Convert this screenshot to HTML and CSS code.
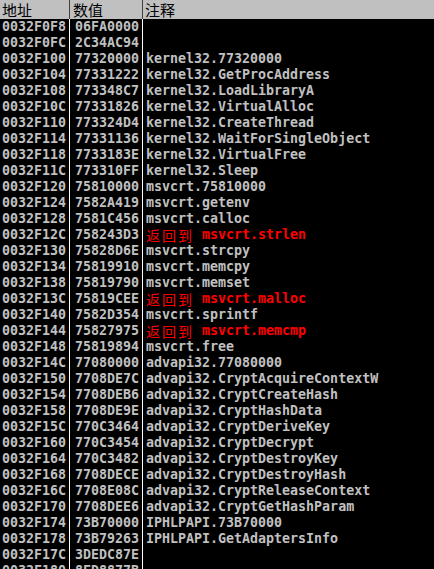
FILE: index.html
```html
<!DOCTYPE html>
<html>
<head>
<meta charset="utf-8">
<link rel="stylesheet" href="styles.css">
</head>
<body>
<div class="dump">
  <div class="head">
    <div class="c1">地址</div>
    <div class="c2">数值</div>
    <div class="c3">注释</div>
  </div>
  <div class="row"><div class="c1">0032F0F8</div><div class="c2">06FA0000</div><div class="c3"></div></div>
  <div class="row"><div class="c1">0032F0FC</div><div class="c2">2C34AC94</div><div class="c3"></div></div>
  <div class="row"><div class="c1">0032F100</div><div class="c2">77320000</div><div class="c3">kernel32.77320000</div></div>
  <div class="row"><div class="c1">0032F104</div><div class="c2">77331222</div><div class="c3">kernel32.GetProcAddress</div></div>
  <div class="row"><div class="c1">0032F108</div><div class="c2">773348C7</div><div class="c3">kernel32.LoadLibraryA</div></div>
  <div class="row"><div class="c1">0032F10C</div><div class="c2">77331826</div><div class="c3">kernel32.VirtualAlloc</div></div>
  <div class="row"><div class="c1">0032F110</div><div class="c2">773324D4</div><div class="c3">kernel32.CreateThread</div></div>
  <div class="row"><div class="c1">0032F114</div><div class="c2">77331136</div><div class="c3">kernel32.WaitForSingleObject</div></div>
  <div class="row"><div class="c1">0032F118</div><div class="c2">7733183E</div><div class="c3">kernel32.VirtualFree</div></div>
  <div class="row"><div class="c1">0032F11C</div><div class="c2">773310FF</div><div class="c3">kernel32.Sleep</div></div>
  <div class="row"><div class="c1">0032F120</div><div class="c2">75810000</div><div class="c3">msvcrt.75810000</div></div>
  <div class="row"><div class="c1">0032F124</div><div class="c2">7582A419</div><div class="c3">msvcrt.getenv</div></div>
  <div class="row"><div class="c1">0032F128</div><div class="c2">7581C456</div><div class="c3">msvcrt.calloc</div></div>
  <div class="row"><div class="c1">0032F12C</div><div class="c2">758243D3</div><div class="c3 ret"><span class="cjk">返回到</span> msvcrt.strlen</div></div>
  <div class="row"><div class="c1">0032F130</div><div class="c2">75828D6E</div><div class="c3">msvcrt.strcpy</div></div>
  <div class="row"><div class="c1">0032F134</div><div class="c2">75819910</div><div class="c3">msvcrt.memcpy</div></div>
  <div class="row"><div class="c1">0032F138</div><div class="c2">75819790</div><div class="c3">msvcrt.memset</div></div>
  <div class="row"><div class="c1">0032F13C</div><div class="c2">75819CEE</div><div class="c3 ret"><span class="cjk">返回到</span> msvcrt.malloc</div></div>
  <div class="row"><div class="c1">0032F140</div><div class="c2">7582D354</div><div class="c3">msvcrt.sprintf</div></div>
  <div class="row"><div class="c1">0032F144</div><div class="c2">75827975</div><div class="c3 ret"><span class="cjk">返回到</span> msvcrt.memcmp</div></div>
  <div class="row"><div class="c1">0032F148</div><div class="c2">75819894</div><div class="c3">msvcrt.free</div></div>
  <div class="row"><div class="c1">0032F14C</div><div class="c2">77080000</div><div class="c3">advapi32.77080000</div></div>
  <div class="row"><div class="c1">0032F150</div><div class="c2">7708DE7C</div><div class="c3">advapi32.CryptAcquireContextW</div></div>
  <div class="row"><div class="c1">0032F154</div><div class="c2">7708DEB6</div><div class="c3">advapi32.CryptCreateHash</div></div>
  <div class="row"><div class="c1">0032F158</div><div class="c2">7708DE9E</div><div class="c3">advapi32.CryptHashData</div></div>
  <div class="row"><div class="c1">0032F15C</div><div class="c2">770C3464</div><div class="c3">advapi32.CryptDeriveKey</div></div>
  <div class="row"><div class="c1">0032F160</div><div class="c2">770C3454</div><div class="c3">advapi32.CryptDecrypt</div></div>
  <div class="row"><div class="c1">0032F164</div><div class="c2">770C3482</div><div class="c3">advapi32.CryptDestroyKey</div></div>
  <div class="row"><div class="c1">0032F168</div><div class="c2">7708DECE</div><div class="c3">advapi32.CryptDestroyHash</div></div>
  <div class="row"><div class="c1">0032F16C</div><div class="c2">7708E08C</div><div class="c3">advapi32.CryptReleaseContext</div></div>
  <div class="row"><div class="c1">0032F170</div><div class="c2">7708DEE6</div><div class="c3">advapi32.CryptGetHashParam</div></div>
  <div class="row"><div class="c1">0032F174</div><div class="c2">73B70000</div><div class="c3">IPHLPAPI.73B70000</div></div>
  <div class="row"><div class="c1">0032F178</div><div class="c2">73B79263</div><div class="c3">IPHLPAPI.GetAdaptersInfo</div></div>
  <div class="row"><div class="c1">0032F17C</div><div class="c2">3DEDC87E</div><div class="c3"></div></div>
  <div class="row"><div class="c1">0032F180</div><div class="c2">8FD8877B</div><div class="c3"></div></div>
</div>
</body>
</html>
```

FILE: styles.css
```css
html, body {
  margin: 0;
  padding: 0;
  background: #000;
  overflow: hidden;
}
.dump {
  width: 434px;
  height: 569px;
  overflow: hidden;
  background: #000;
}
.head {
  display: flex;
  height: 19px;
  background: #c0c0c0;
  color: #000;
  font-family: "Noto Sans CJK SC", sans-serif;
  font-size: 15px;
  line-height: 19px;
}
.head .c1, .head .c2 {
  border-right: 1px solid #404040;
}
.head .c1 { padding-left: 2px; }
.head .c2 { padding-left: 3px; }
.head .c3 { padding-left: 2px; }
.row {
  display: flex;
  height: 16px;
  line-height: 16px;
  color: #c0c0c0;
  font-family: "DejaVu Sans Mono", monospace;
  font-weight: bold;
  font-size: 13.3px;
  white-space: pre;
}
.c1 {
  box-sizing: border-box;
  width: 70px;
  padding-left: 2px;
  flex: none;
}
.c2 {
  box-sizing: border-box;
  width: 73px;
  padding-left: 5px;
  flex: none;
}
.c3 {
  flex: 1;
  padding-left: 3px;
  overflow: hidden;
}
.row .c1, .row .c2 {
  border-right: 1px solid #ffffff;
}
.ret {
  color: #ff0000;
}
.cjk {
  display: inline-block;
  vertical-align: top;
  height: 16px;
  overflow: hidden;
  font-family: "Noto Sans CJK SC", sans-serif;
  font-weight: normal;
  font-size: 14px;
  letter-spacing: 2px;
  line-height: 16px;
}
```
